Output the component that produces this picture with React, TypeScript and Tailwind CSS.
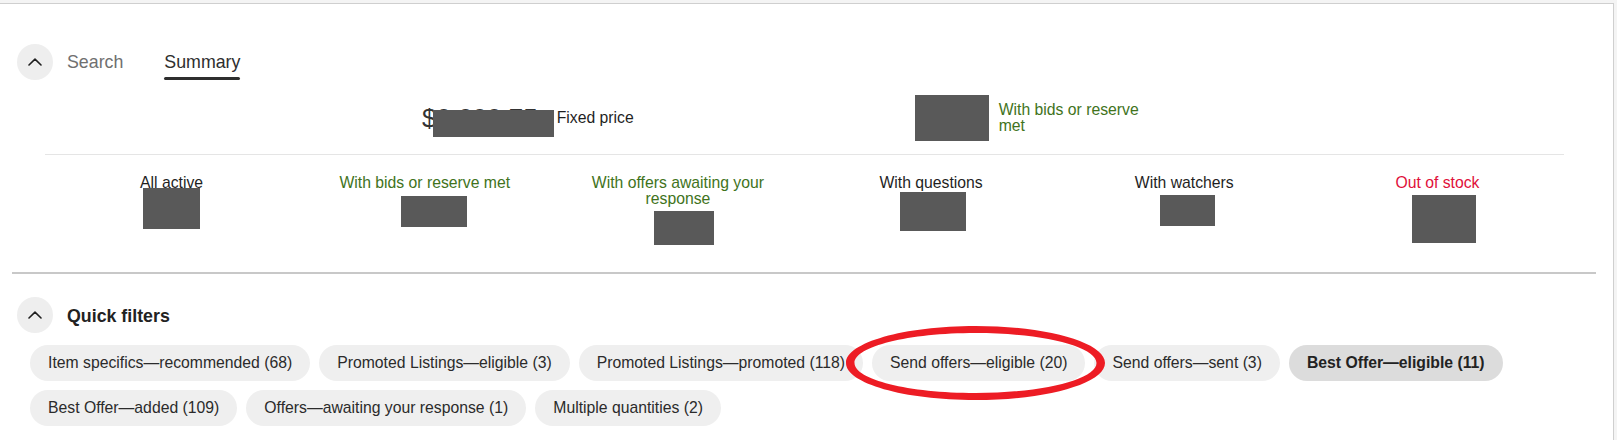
// Listings summary panel — tabs, totals, stat tiles and quick filter pills.
const FONT = "font-['Liberation_Sans',Arial,sans-serif]";

const STATS = [
  { label: 'All active', text: 'text-[#1f1f1f]', box: 'w-[57px] h-[41px] -mt-[3px]' },
  { label: 'With bids or reserve met', text: 'text-[#41731c]', box: 'w-[66px] h-[31px] mt-[5px] translate-x-[9px]' },
  { label: 'With offers awaiting your response', text: 'text-[#41731c]', box: 'w-[60px] h-[34px] mt-[4px] translate-x-[6px]' },
  { label: 'With questions', text: 'text-[#1f1f1f]', box: 'w-[66px] h-[39px] mt-[1px] translate-x-[2px]' },
  { label: 'With watchers', text: 'text-[#1f1f1f]', box: 'w-[55px] h-[31px] mt-[4px] translate-x-[3px]' },
  { label: 'Out of stock', text: 'text-[#e0103a]', box: 'w-[64px] h-[48px] mt-[4px] translate-x-[7px]' },
];

const FILTERS = [
  { label: 'Item specifics\u2014recommended (68)' },
  { label: 'Promoted Listings\u2014eligible (3)' },
  { label: 'Promoted Listings\u2014promoted (118)' },
  { label: 'Send offers\u2014eligible (20)' },
  { label: 'Send offers\u2014sent (3)' },
  { label: 'Best Offer\u2014eligible (11)', active: true },
  { label: 'Best Offer\u2014added (109)' },
  { label: 'Offers\u2014awaiting your response (1)' },
  { label: 'Multiple quantities (2)' },
];

function Chevron() {
  return (
    <button className="w-[36px] h-[36px] rounded-full bg-[#eeeeee] flex items-center justify-center shrink-0">
      <svg width="14" height="8" viewBox="0 0 14 8" fill="none">
        <path d="M1 7L7 1.2L13 7" stroke="#1f1f1f" strokeWidth="1.6" strokeLinecap="round" strokeLinejoin="round" />
      </svg>
    </button>
  );
}

export default function App() {
  return (
    <div className={`${FONT} w-full h-[440px] bg-[#f4f4f4] pt-[3px] pr-[3px] overflow-hidden`}>
      <div className="h-full bg-white border-t border-r border-[#cfcfcf]">
        {/* Tabs */}
        <div className="mt-[40px] h-[36px] flex items-center pl-[17px]">
          <Chevron />
          <span className="ml-[14px] text-[17.8px] leading-[20px] text-[#707070]">Search</span>
          <div className="ml-[41px] h-[36px] flex flex-col pt-[8px]">
            <span className="text-[17.8px] leading-[20px] text-[#2e2e2e]">Summary</span>
            <div className="mt-[5px] h-[3px] rounded-full bg-[#2e2e2e]" />
          </div>
        </div>

        {/* Totals */}
        <div className="mt-[15px] h-[46px] flex items-center pl-[422px]">
          <span className="relative text-[26px] leading-[30px] text-[#333]">
            $0,000.75
            <span className="absolute left-[11px] top-[7px] w-[121px] h-[27px] bg-[#595959]" />
          </span>
          <span className="ml-[19px] text-[15.75px] text-[#1f1f1f]">Fixed price</span>
          <div className="ml-[281px] w-[74px] h-[46px] bg-[#595959]" />
          <span className="ml-[10px] w-[150px] text-[15.75px] leading-[16px] text-[#41731c]">With bids or reserve met</span>
        </div>

        <div className="mt-[13px] ml-[45px] w-[1519px] h-px bg-[#e5e5e5]" />

        {/* Stat tiles */}
        <div className="ml-[45px] w-[1519px] grid grid-cols-6 pt-[20px]">
          {STATS.map((s) => (
            <div key={s.label} className="flex flex-col items-center px-[24px] text-center">
              <span className={`text-[15.75px] leading-[16px] ${s.text}`}>{s.label}</span>
              <div className={`bg-[#595959] ${s.box}`} />
            </div>
          ))}
        </div>

        <div className="mt-[27px] ml-[12px] w-[1584px] h-[2px] bg-[#c8c8c8]" />

        {/* Quick filters */}
        <div className="mt-[23px] h-[36px] flex items-center pl-[17px]">
          <Chevron />
          <span className="ml-[14px] mt-[2px] text-[17.8px] leading-[20px] font-bold text-[#222]">Quick filters</span>
        </div>

        <div className="relative mt-[12px] pl-[30px] flex flex-wrap gap-[9px]">
          {FILTERS.map((f) => (
            <button
              key={f.label}
              className={`h-[36px] px-[18px] rounded-full flex items-center text-[15.75px] whitespace-nowrap ${
                f.active ? 'bg-[#dcdcdc] font-bold text-[#222]' : 'bg-[#efefef] text-[#2b2b2b]'
              }`}
            >
              {f.label}
            </button>
          ))}
          {/* red annotation ring */}
          <svg className="absolute left-[846px] -top-[19px] w-[259px] h-[74px] pointer-events-none" viewBox="0 0 259 74">
            <path
              fillRule="evenodd"
              fill="#ed1c24"
              d="M129.5 0C58 0 0 16.6 0 37s58 37 129.5 37S259 57.4 259 37 201 0 129.5 0Zm0 7C62.7 7 8.5 20.4 8.5 37s54.2 30 121 30 121-13.4 121-30-54.2-30-121-30Z"
            />
          </svg>
        </div>
      </div>
    </div>
  );
}
